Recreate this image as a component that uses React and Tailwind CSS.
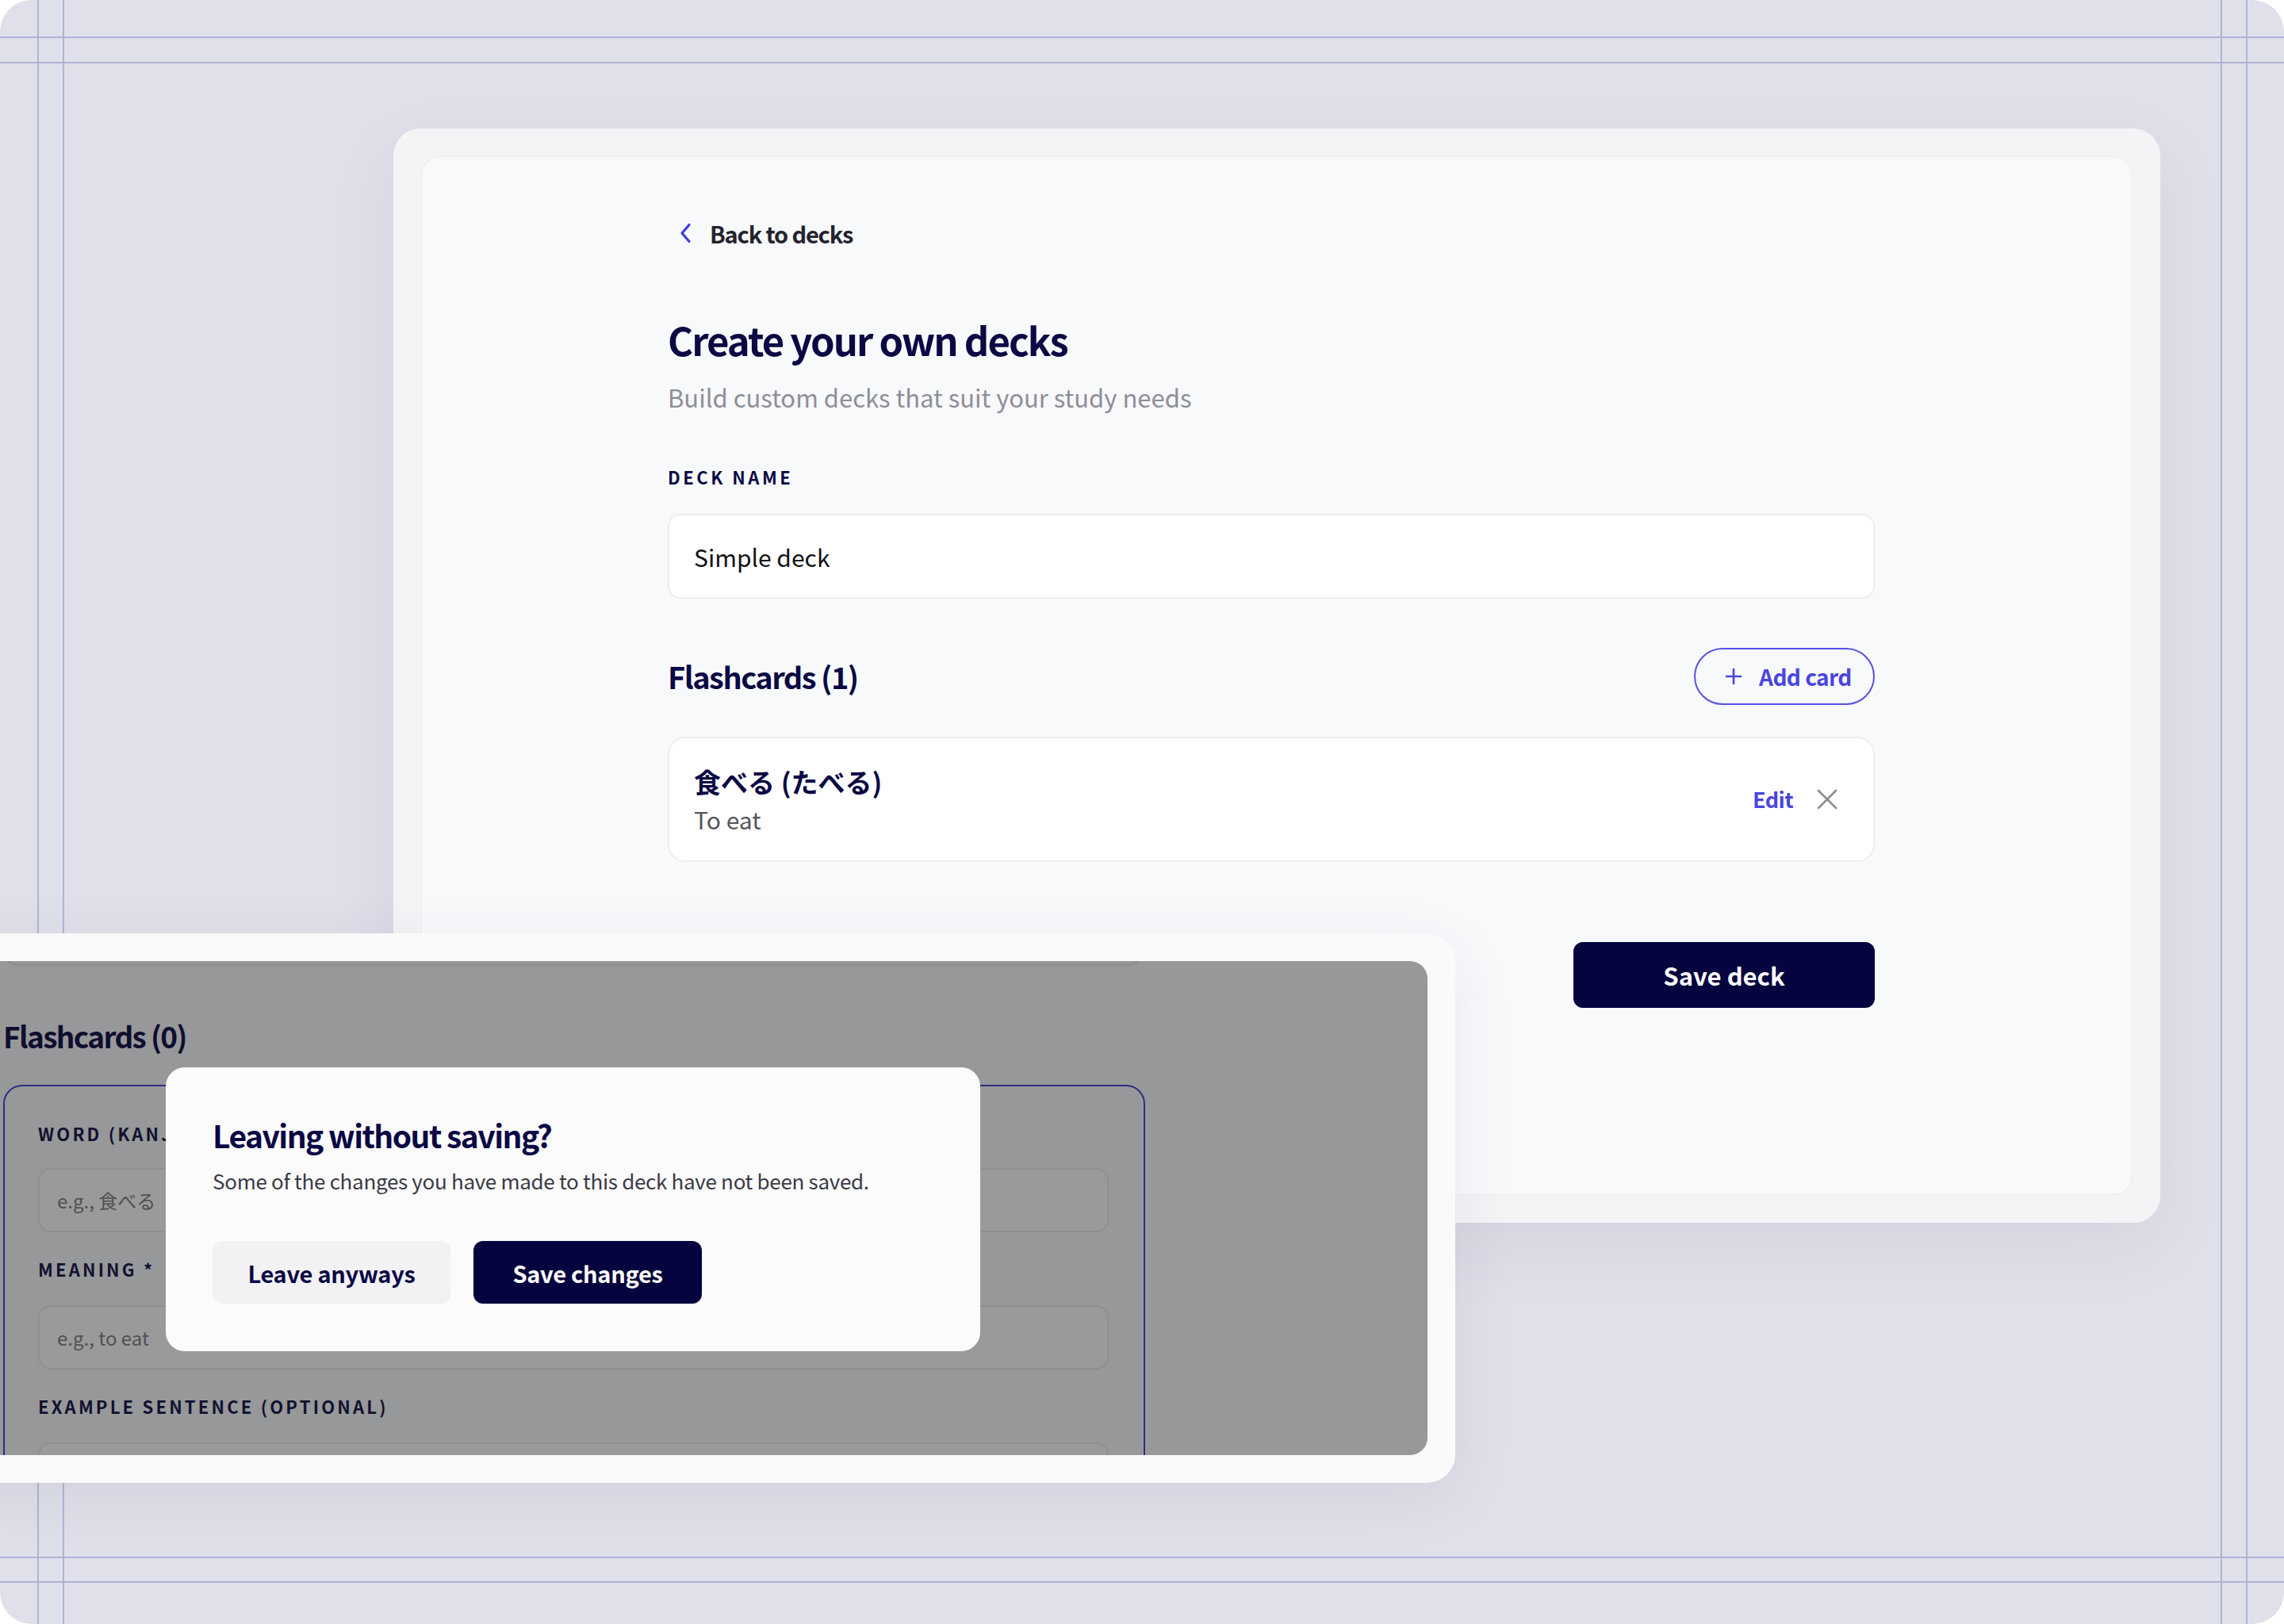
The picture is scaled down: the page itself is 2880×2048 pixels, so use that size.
import React from "react";

const navy = "text-[#0b0944]";

function Chevron() {
  return (
    <svg width="16" height="26" viewBox="0 0 16 26" fill="none">
      <path d="M13 2.5 L4 13 L13 23.5" stroke="#3d3ce0" strokeWidth="3.2" strokeLinecap="round" strokeLinejoin="round" />
    </svg>
  );
}

function PlusIcon() {
  return (
    <svg width="22" height="22" viewBox="0 0 22 22" fill="none">
      <path d="M11 2 V20 M2 11 H20" stroke="#4a45e0" strokeWidth="2.6" strokeLinecap="round" />
    </svg>
  );
}

function CloseIcon() {
  return (
    <svg width="28" height="28" viewBox="0 0 28 28" fill="none">
      <path d="M3 3 L25 25 M25 3 L3 25" stroke="#8c8c90" strokeWidth="2.6" strokeLinecap="round" />
    </svg>
  );
}

function GuideLines() {
  return (
    <>
      <div className="absolute left-0 right-0 top-[46px] h-[2px] bg-[#b0b3d3]" />
      <div className="absolute left-0 right-0 top-[78px] h-[2px] bg-[#b0b3d3]" />
      <div className="absolute left-0 right-0 top-[1963px] h-[2px] bg-[#b0b3d3]" />
      <div className="absolute left-0 right-0 top-[1994px] h-[2px] bg-[#b0b3d3]" />
      <div className="absolute top-0 bottom-0 left-[47px] w-[2px] bg-[#b0b3d3]" />
      <div className="absolute top-0 bottom-0 left-[79px] w-[2px] bg-[#b0b3d3]" />
      <div className="absolute top-0 bottom-0 left-[2800px] w-[2px] bg-[#b0b3d3]" />
      <div className="absolute top-0 bottom-0 left-[2832px] w-[2px] bg-[#b0b3d3]" />
    </>
  );
}

function DeckEditor() {
  return (
    <div className="absolute left-[496px] top-[162px] h-[1380px] w-[2228px] rounded-[34px] bg-[#f4f4f7] p-[35px] shadow-[0_30px_90px_rgba(50,50,90,0.07)]">
      <div className="h-full rounded-[24px] border border-[#ebebef] bg-[#f8f9fb] pl-[310px] pt-[76px]">
        <div className="flex w-[1522px] flex-col">
          <div className="flex h-[40px] items-center">
            <div className="ml-[14px] flex w-[16px] justify-center">
              <Chevron />
            </div>
            <span className="ml-[23px] text-[29px] font-semibold leading-[40px] tracking-[-0.04em] text-[#24242e]">Back to decks</span>
          </div>

          <h1 className={`mt-[84px] text-[49px] font-bold leading-[60px] tracking-[-0.04em] ${navy}`}>Create your own decks</h1>
          <p className="mt-[23px] text-[31px] leading-[40px] text-[#8e8e98]">Build custom decks that suit your study needs</p>

          <label className={`mt-[66px] text-[22px] font-bold uppercase leading-[28px] tracking-[0.16em] ${navy}`}>Deck name</label>
          <div className="mt-[33px] flex h-[107px] items-center rounded-[16px] border-2 border-[#ededf1] bg-white px-[31px]">
            <span className="text-[30px] leading-[40px] text-[#111116]">Simple deck</span>
          </div>

          <div className="mt-[62px] flex h-[72px] items-center justify-between">
            <h2 className={`text-[38px] font-bold leading-[48px] tracking-[-0.04em] ${navy}`}>Flashcards (1)</h2>
            <button className="flex h-[72px] w-[228px] items-center rounded-full border-2 border-[#5550e6] pl-[37px]">
              <PlusIcon />
              <span className="ml-[21px] text-[28px] font-bold leading-[36px] tracking-[-0.02em] text-[#4a45dc]">Add card</span>
            </button>
          </div>

          <div className="mt-[40px] flex h-[158px] items-center justify-between rounded-[22px] border-2 border-[#ededf1] bg-white pl-[31px] pr-[44px]">
            <div className="flex flex-col">
              <span className={`text-[34px] font-bold leading-[44px] ${navy}`}>食べる (たべる)</span>
              <span className="mt-[5px] text-[30px] leading-[40px] text-[#55555c]">To eat</span>
            </div>
            <div className="flex items-center gap-[29px]">
              <span className="text-[27px] font-bold leading-[36px] tracking-[-0.02em] text-[#4a45dc]">Edit</span>
              <CloseIcon />
            </div>
          </div>

          <div className="mt-[101px] flex justify-end">
            <button className="flex h-[83px] w-[380px] items-center justify-center rounded-[12px] bg-[#06043e] text-[31px] font-bold leading-[40px] text-white">
              Save deck
            </button>
          </div>
        </div>
      </div>
    </div>
  );
}

function DimLabel({ children, className = "" }) {
  return (
    <div className={`whitespace-nowrap text-[22px] font-bold uppercase leading-[28px] tracking-[0.145em] text-[#12112e] ${className}`}>
      {children}
    </div>
  );
}

function DimInput({ placeholder, className = "" }) {
  return (
    <div className={`flex h-[81px] w-[1350px] items-center rounded-[16px] border-2 border-[#8f8f91] bg-[#9a9a9b] px-[22px] ${className}`}>
      <span className="text-[24px] leading-[34px] text-[#505055]">{placeholder}</span>
    </div>
  );
}

function LeaveDialog() {
  return (
    <div className="absolute left-[-100px] top-[1177px] h-[693px] w-[1935px] rounded-[36px] bg-[#fafafb] p-[35px] shadow-[0_20px_80px_rgba(50,50,90,0.08)]">
      <div className="relative h-full overflow-hidden rounded-[22px] bg-[#97989a] pl-[69px]">
        <div className="mt-[-30px] h-[36px] w-[1438px] rounded-b-[20px] border-2 border-[#8c8c8e]" />

        <h2 className="mt-[64px] text-[37px] font-bold leading-[48px] tracking-[-0.045em] text-[#0f0e2e]">Flashcards (0)</h2>

        <div className="mt-[38px] h-[600px] w-[1440px] rounded-[24px] border-2 border-[#2e2c84] pl-[42px] pt-[45px]">
          <DimLabel>Word (kanji/kana) *</DimLabel>
          <DimInput className="mt-[30px]" placeholder="e.g., 食べる" />
          <DimLabel className="mt-[32px]">Meaning *</DimLabel>
          <DimInput className="mt-[32px]" placeholder="e.g., to eat" />
          <DimLabel className="mt-[32px]">Example sentence (optional)</DimLabel>
          <DimInput className="mt-[32px]" placeholder="" />
        </div>

        <div className="absolute left-[274px] top-[134px] w-[1027px] rounded-[24px] bg-[#fbfbfc] px-[59px] pb-[60px] pt-[61px]">
          <h3 className={`text-[39px] font-bold leading-[48px] tracking-[-0.04em] ${navy}`}>Leaving without saving?</h3>
          <p className="mt-[16px] text-[26px] leading-[36px] tracking-[-0.012em] text-[#3a3a44]">
            Some of the changes you have made to this deck have not been saved.
          </p>
          <div className="mt-[58px] flex gap-[29px]">
            <button className={`flex h-[79px] w-[300px] items-center justify-center rounded-[12px] bg-[#f2f2f5] text-[29px] font-bold leading-[38px] tracking-[-0.01em] ${navy}`}>
              Leave anyways
            </button>
            <button className="flex h-[79px] w-[288px] items-center justify-center rounded-[12px] bg-[#06043e] text-[29px] font-bold leading-[38px] tracking-[-0.01em] text-white">
              Save changes
            </button>
          </div>
        </div>
      </div>
    </div>
  );
}

export default function App() {
  return (
    <div className="relative h-[2048px] w-[2880px] overflow-hidden bg-white font-['Noto_Sans_CJK_JP','Noto_Sans',sans-serif]">
      <div className="absolute inset-0 overflow-hidden rounded-[40px] bg-[#e0e0ea]">
        <GuideLines />
        <DeckEditor />
        <LeaveDialog />
      </div>
    </div>
  );
}
